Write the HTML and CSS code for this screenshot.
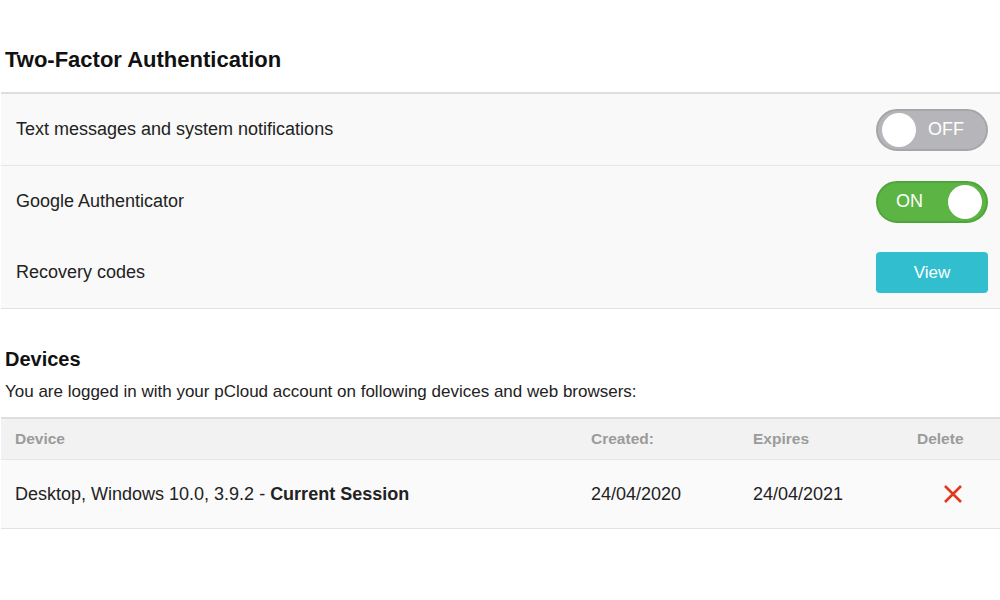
FILE: index.html
```html
<!DOCTYPE html>
<html lang="en">
<head>
    <meta charset="UTF-8">
    <title>Security Settings</title>
    <link rel="stylesheet" href="styles.css">
</head>
<body>
    <h1 class="section-title">Two-Factor Authentication</h1>

    <!-- 2FA options -->
    <div class="panel">
        <div class="setting-row divided">
            <span>Text messages and system notifications</span>
            <button class="toggle toggle-off"><span class="knob"></span><span class="toggle-label">OFF</span></button>
        </div>
        <div class="setting-row">
            <span>Google Authenticator</span>
            <button class="toggle toggle-on"><span class="toggle-label">ON</span><span class="knob"></span></button>
        </div>
        <div class="setting-row">
            <span>Recovery codes</span>
            <button class="view-button">View</button>
        </div>
    </div>

    <h2 class="devices-title">Devices</h2>
    <p class="devices-info">You are logged in with your pCloud account on following devices and web browsers:</p>

    <!-- Devices table -->
    <div class="devices-table">
        <div class="table-row table-head">
            <span>Device</span>
            <span>Created:</span>
            <span>Expires</span>
            <span>Delete</span>
        </div>
        <div class="table-row table-body">
            <span>Desktop, Windows 10.0, 3.9.2 - <b>Current Session</b></span>
            <span>24/04/2020</span>
            <span>24/04/2021</span>
            <span class="col-delete">
                <svg width="20" height="20" viewBox="0 0 20 20">
                    <path d="M2 2 L18 18 M18 2 L2 18" stroke="#e0391f" stroke-width="2.6" fill="none"/>
                </svg>
            </span>
        </div>
    </div>
</body>
</html>
```

FILE: styles.css
```css
body {
    font-family: "Liberation Sans", Arial, sans-serif;
    color: #222;
    background: #fff;
    margin: 0;
    padding: 0;
}

.section-title {
    font-size: 22px;
    font-weight: bold;
    color: #111;
    margin: 0;
    padding: 47px 5px 20px;
    line-height: 25px;
}

.panel {
    background-color: #f9f9f9;
    border-top: 2px solid #dedede;
    border-bottom: 1px solid #e2e2e2;
    margin-left: 1px;
}

.setting-row {
    display: flex;
    align-items: center;
    justify-content: space-between;
    height: 71px;
    padding: 0 12px 0 15px;
    font-size: 18px;
}

.setting-row.divided {
    border-bottom: 1px solid #e6e6e6;
}

.toggle {
    width: 112px;
    height: 42px;
    border-radius: 21px;
    border: 2px solid #a9a9ad;
    display: flex;
    align-items: center;
    justify-content: space-between;
    padding: 0 4px;
    font-family: "Liberation Sans", Arial, sans-serif;
    font-size: 18px;
    color: #fff;
    cursor: pointer;
}

.toggle-off {
    background-color: #b6b6ba;
    border-color: #a6a6aa;
    padding-right: 22px;
}

.toggle-on {
    background-color: #5cb445;
    border-color: #4ea63a;
    padding-left: 18px;
}

.knob {
    width: 34px;
    height: 34px;
    border-radius: 50%;
    background: #fff;
}

.view-button {
    width: 112px;
    height: 41px;
    background-color: #31bfd0;
    color: #fff;
    border: none;
    border-radius: 4px;
    font-family: "Liberation Sans", Arial, sans-serif;
    font-size: 17px;
    cursor: pointer;
}

.devices-title {
    font-size: 20px;
    font-weight: bold;
    color: #111;
    margin: 0;
    padding: 39px 5px 0;
    line-height: 23px;
}

.devices-info {
    font-size: 17px;
    line-height: 20px;
    margin: 11px 0 0;
    padding: 0 5px;
}

.devices-table {
    margin-top: 15px;
    border-top: 2px solid #dedede;
    border-bottom: 1px solid #e2e2e2;
    margin-left: 1px;
}

.table-row {
    display: grid;
    grid-template-columns: 576px 162px 164px 1fr;
    align-items: center;
    padding-left: 14px;
}

.table-head {
    height: 40px;
    background-color: #f2f2f2;
    color: #9b9b9b;
    font-weight: bold;
    font-size: 15.5px;
    border-bottom: 1px solid #e6e6e6;
}

.table-body {
    height: 68px;
    background-color: #fafafa;
    font-size: 18px;
}

.col-delete {
    padding-left: 26px;
}

.col-delete svg {
    display: block;
}
```
